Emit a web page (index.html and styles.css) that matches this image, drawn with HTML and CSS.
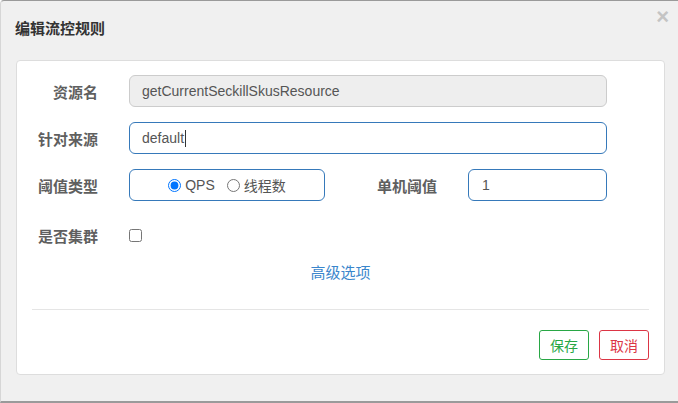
FILE: index.html
```html
<!DOCTYPE html>
<html lang="zh">
<head>
<meta charset="utf-8">
<link rel="stylesheet" href="styles.css">
</head>
<body>
<div class="dialog">
  <div class="header">
    <div class="title">编辑流控规则</div>
    <div class="close">×</div>
  </div>
  <div class="card">
    <div class="row r1">
      <div class="label">资源名</div>
      <div class="input disabled wide">getCurrentSeckillSkusResource</div>
    </div>
    <div class="row r2">
      <div class="label">针对来源</div>
      <div class="input wide">default<span class="caret"></span></div>
    </div>
    <div class="row r3">
      <div class="label">阈值类型</div>
      <div class="input radios">
        <label class="opt"><input type="radio" name="t" checked>QPS</label>
        <label class="opt"><input type="radio" name="t">线程数</label>
      </div>
      <div class="label label2">单机阈值</div>
      <div class="input small">1</div>
    </div>
    <div class="row r4">
      <div class="label">是否集群</div>
      <input type="checkbox" class="check">
    </div>
    <div class="advanced">高级选项</div>
    <div class="divider"></div>
    <div class="footer">
      <button class="btn save">保存</button>
      <button class="btn cancel">取消</button>
    </div>
  </div>
</div>
</body>
</html>
```

FILE: styles.css
```css
html, body {
  margin: 0;
  padding: 0;
}
body {
  font-family: "Liberation Sans", Arial, "Noto Sans CJK SC", sans-serif;
  font-size: 14px;
  color: #555;
  background: #fff;
}
.dialog {
  width: 678px;
  height: 403px;
  box-sizing: border-box;
  background: #f0f0f0;
  border-top: 1px solid #9a9a9a;
  border-left: 1px solid #d6d6d6;
  border-bottom: 2px solid #9a9a9a;
  border-top-left-radius: 4px;
  display: flex;
  flex-direction: column;
}
.header {
  height: 59px;
  display: flex;
  justify-content: space-between;
  align-items: flex-start;
  padding: 0 9px 0 14px;
}
.title {
  margin-top: 17px;
  font-family: "Noto Sans CJK SC", sans-serif;
  font-weight: bold;
  font-size: 15px;
  color: #333;
  line-height: 20px;
}
.close {
  margin-top: 3px;
  font-size: 22px;
  font-weight: bold;
  color: #c4c4c4;
  line-height: 26px;
}
.card {
  margin: 0 13px 0 15px;
  height: 315px;
  box-sizing: border-box;
  background: #fff;
  border: 1px solid #ddd;
  border-radius: 4px;
  padding: 14px 15px 14px 0;
  display: flex;
  flex-direction: column;
}
.row {
  display: flex;
  align-items: center;
  height: 32px;
}
.r2, .r3 { margin-top: 15px; }
.r4 { margin-top: 18px; }
.label {
  width: 81px;
  text-align: right;
  margin-right: 31px;
  font-family: "Noto Sans CJK SC", sans-serif;
  font-weight: bold;
  font-size: 15px;
  color: #5f5f5f;
}
.input {
  height: 32px;
  box-sizing: border-box;
  border: 1px solid #3679ba;
  border-radius: 6px;
  padding: 0 12px;
  display: flex;
  align-items: center;
  font-size: 14px;
  color: #555;
  background: #fff;
}
.wide { width: 478px; }
.disabled {
  background: #eee;
  border-color: #ccc;
}
.caret {
  display: inline-block;
  width: 1px;
  height: 17px;
  background: #333;
  margin-left: 1px;
}
.radios {
  width: 196px;
  justify-content: center;
  padding: 0;
  gap: 12px;
}
.opt {
  display: flex;
  align-items: center;
  font-family: "Liberation Sans", Arial, "Noto Sans CJK SC", sans-serif;
  font-size: 14px;
  color: #555;
}
.opt input {
  margin: 0 4px 0 0;
  width: 13px;
  height: 13px;
}
.label2 {
  width: 112px;
  margin-right: 31px;
}
.small {
  width: 139px;
  padding-left: 13px;
}
.check {
  margin: 0;
  width: 13px;
  height: 13px;
}
.advanced {
  margin-top: 11px;
  text-align: center;
  padding-left: 15px;
  line-height: 20px;
  font-family: "Noto Sans CJK SC", sans-serif;
  font-size: 15px;
  color: #3a86cc;
}
.divider {
  margin: 27px 0 0 15px;
  border-top: 1px solid #e5e5e5;
}
.footer {
  margin-top: 20px;
  display: flex;
  justify-content: flex-end;
  gap: 10px;
  padding-right: 0;
}
.btn {
  width: 50px;
  height: 30px;
  box-sizing: border-box;
  background: #fff;
  border: 1px solid;
  border-radius: 3px;
  font-family: "Noto Sans CJK SC", sans-serif;
  font-size: 14px;
  padding: 0;
  margin: 0;
}
.save { color: #28a745; border-color: #28a745; }
.cancel { color: #dc3545; border-color: #dc3545; }
```
